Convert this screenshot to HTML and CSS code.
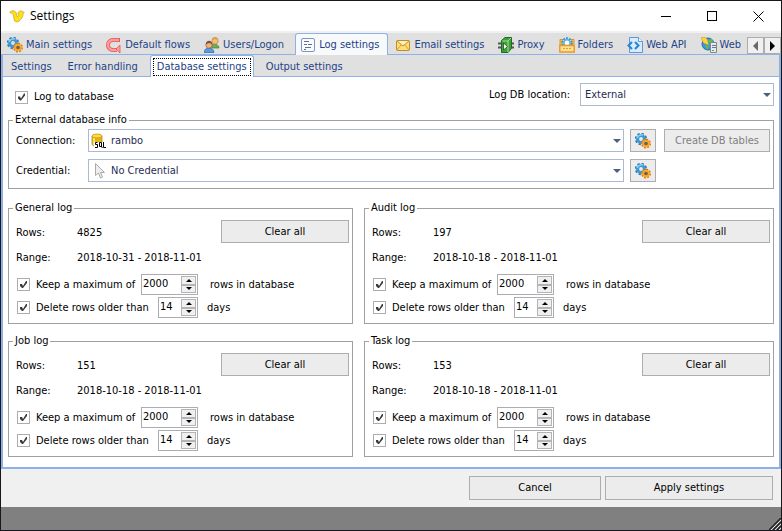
FILE: index.html
```html
<!DOCTYPE html>
<html lang="en">
<head>
    <meta charset="UTF-8">
    <meta name="viewport" content="width=device-width, initial-scale=1.0">
    <title>Settings</title>
    <link rel="stylesheet" href="styles.css">
</head>
<body>

    <!-- shared icons -->
    <svg class="defs" width="0" height="0">
        <symbol id="gears" viewBox="0 0 16 16">
            <circle cx="6" cy="6" r="5" fill="none" stroke="#2b7bb5" stroke-width="2.4" stroke-dasharray="2.2 1.7"/>
            <circle cx="6" cy="6" r="3.4" fill="none" stroke="#3f97d4" stroke-width="3"/>
            <path d="M2 5a5 5 0 0 1 6-3" fill="none" stroke="#8cd0f5" stroke-width="1.5"/>
            <circle cx="11" cy="10.5" r="4" fill="none" stroke="#d9780c" stroke-width="2" stroke-dasharray="1.8 1.3"/>
            <circle cx="11" cy="10.5" r="2.8" fill="#b85a08" stroke="#ffa621" stroke-width="2"/>
            <circle cx="11" cy="10.5" r="1.5" fill="#4b6a82"/>
        </symbol>
    </svg>

    <div class="window">
        <header class="titlebar">
            <svg class="logo" width="16" height="14" viewBox="0 0 16 14">
                <path d="M.7 3.5C2 1.5 5.500 1 7 3.500L8 7.500C10 7.500 10 6.500 9 5 8.500 3 10.500 1.500 12.500 2L15.300 3.500 14 4.500C14.500 8 12 9.500 10.500 12L8 13 5.500 12 4.500 7C4.500 5 3 4 .7 3.500z" fill="#fbe116" stroke="#cda92c" stroke-width=".8" stroke-linejoin="round"/>
            </svg>
            <h1>Settings</h1>
            <div class="window-buttons">
                <button aria-label="Minimize"><svg width="11" height="11"><path d="M0 5.5h10" stroke="#000"/></svg></button>
                <button aria-label="Maximize"><svg width="11" height="11"><rect x=".5" y=".5" width="9" height="9" fill="none" stroke="#000"/></svg></button>
                <button aria-label="Close"><svg width="11" height="11"><path d="M.5.5l10 10M10.500.5l-10 10" stroke="#000"/></svg></button>
            </div>
        </header>

        <div class="tabbar">
            <nav class="tabs">
                <button class="tab"><svg width="16" height="16"><use href="#gears"/></svg>Main settings</button>
                <button class="tab">
                    <svg width="16" height="16" viewBox="0 0 16 16">
                        <path d="M14 3H7a5 5 0 0 0 0 10h4" fill="none" stroke="#e05858" stroke-width="4"/>
                        <path d="M13 3H7a5 5 0 0 0 0 10h4" fill="none" stroke="#ff9c9c" stroke-width="2.4"/>
                        <path d="M14 8l-4 4 4 4z" fill="#ff9c9c" stroke="#e05858" stroke-width=".8"/>
                    </svg>Default flows</button>
                <button class="tab">
                    <svg width="16" height="16" viewBox="0 0 16 16">
                        <path d="M6 11c0-5 9-5 9 0z" fill="#6cae4c" stroke="#438234" stroke-width=".7"/>
                        <circle cx="11" cy="4" r="3.2" fill="#f3bd84" stroke="#b07434" stroke-width=".6"/>
                        <path d="M8 3c0-4 6-4 6 0-2-1-4-1-6 0" fill="#dba23f"/>
                        <path d="M0 15.5c0-6 10-6 10 0z" fill="#5b9be0" stroke="#2b68ad" stroke-width=".7"/>
                        <circle cx="5" cy="8" r="3.2" fill="#edb183" stroke="#8a5430" stroke-width=".6"/>
                        <path d="M1.8 7.5c0-5 6.5-5 6.5 0-2-2-4-2-6.5 0" fill="#805034"/>
                    </svg>Users/Logon</button>
                <button class="tab active">
                    <svg width="16" height="16" viewBox="0 0 16 16">
                        <rect x="1.5" y="1.5" width="13" height="13" rx="1.5" fill="#f9fbff" stroke="#7c95cb"/>
                        <path d="M4 4.5h5M4 7.5h3M8 7.5h4M5 10.5h6M4 12.5h2" stroke="#62708c"/>
                    </svg>Log settings</button>
                <button class="tab">
                    <svg width="16" height="16" viewBox="0 0 16 16">
                        <rect x="1.5" y="3.5" width="13" height="10" rx="1" fill="#ffdf72" stroke="#bc8b32"/>
                        <path d="M2 13l4-5M14 13l-4-5" stroke="#d09b38"/>
                        <path d="M2 4l6 5 6-5" fill="#fff0b4" stroke="#bc8b32"/>
                    </svg>Email settings</button>
                <button class="tab">
                    <svg width="16" height="16" viewBox="0 0 16 16">
                        <path d="M0 6.5h4M0 10.5h4M13 6.5h3M13 10.5h3" stroke="#555" stroke-width="2"/>
                        <path d="M3.500 3.500L7 .5h6.500v11L10 15.500H3.500z" fill="#3fa03a" stroke="#1f6a24"/>
                        <path d="M4.500 4h5.500l3-3M10 4v11" fill="none" stroke="#a6e291"/>
                        <path d="M5.500 6l4 3.500-4 3.500z" fill="#fff" stroke="#1b4f20" stroke-width=".8"/>
                    </svg>Proxy</button>
                <button class="tab">
                    <svg width="16" height="16" viewBox="0 0 16 16">
                        <path d="M1 2.500h14v7H1z" fill="#ffc04a" stroke="#e1941e"/>
                        <circle cx="8" cy="6" r="4.8" fill="#e9f7ff" stroke="#3994cc" stroke-width="2" stroke-dasharray="2 1"/>
                        <circle cx="8" cy="6" r="3.2" fill="#fff" stroke="#58afe0" stroke-width="1.600"/>
                        <path d="M.8 8.500h14.400v6.500H.8z" fill="#ffe18b" stroke="#ef9625" stroke-width="1.400"/>
                        <path d="M4 11.5h8" stroke="#cfa24b" stroke-dasharray="2 1"/>
                    </svg>Folders</button>
                <button class="tab">
                    <svg width="16" height="16" viewBox="0 0 16 16">
                        <path d="M2.500.5h9l4 4v11h-13z" fill="#d9ebff" stroke="#6095da"/>
                        <path d="M11.500.5v4h4" fill="#fff" stroke="#6095da"/>
                        <path d="M5 5L1.500 8.500 5 12M8 5l3.500 3.500L8 12" fill="none" stroke="#2586d2" stroke-width="2"/>
                    </svg>Web API</button>
                <button class="tab">
                    <svg width="16" height="16" viewBox="0 0 16 16">
                        <circle cx="7" cy="7" r="6" fill="#3a96dc" stroke="#2669a8"/>
                        <path d="M7 3l4-1 1 3-3 2zM4 8l4 1-2 4z" fill="#63bc43"/>
                        <path d="M0 .5l4.500 0 2 2.500 1 5-5-2z" fill="#ffd43a" stroke="#d99d1c" stroke-width=".6"/>
                        <path d="M9.500 5.500h6v10h-6z" fill="#e6eaee" stroke="#7d8a96"/>
                        <path d="M11 8.500h4M11 10.500h4" stroke="#6d7984"/>
                        <path d="M11 13.500h2" stroke="#4cbc2e"/>
                    </svg>Web</button>
            </nav>
            <div class="scroll-buttons">
                <button aria-label="Scroll left"><svg width="5" height="10"><path d="M5 0v10L0 5z" fill="#696969"/></svg></button>
                <button aria-label="Scroll right"><svg width="5" height="10"><path d="M0 0v10l5-5z" fill="#000"/></svg></button>
            </div>
        </div>

        <main class="page">
            <nav class="subtabs">
                <button class="subtab">Settings</button>
                <button class="subtab">Error handling</button>
                <button class="subtab active"><span>Database settings</span></button>
                <button class="subtab">Output settings</button>
            </nav>

            <div class="content">
                <div class="top-row">
                    <label class="check"><input type="checkbox" checked>Log to database</label>
                    <div class="location">
                        <label for="location">Log DB location:</label>
                        <div class="select">
                            <select id="location"><option>External</option></select>
                        </div>
                    </div>
                </div>

                <fieldset class="database">
                    <legend>External database info</legend>
                    <div class="db-row">
                        <label for="connection">Connection:</label>
                        <div class="select with-icon">
                            <svg width="16" height="16" viewBox="0 0 16 16">
                                <path d="M1 3v8c0 3 10 3 10 0V3z" fill="#e7b416" stroke="#a98018" stroke-width=".7"/>
                                <path d="M3 4v8" stroke="#fbe16c" stroke-width="2"/>
                                <ellipse cx="6" cy="3" rx="5" ry="2" fill="#ffdb3d" stroke="#b58a1d" stroke-width=".7"/>
                                <path d="M3 9h13v6H3z" fill="#fff"/>
                                <path d="M6.500 9.500h-2v2h2v3H4M8.500 9.500h2v4h-2zM10 13l1.500 2M12.500 9v5.500H15" fill="none" stroke="#000"/>
                            </svg>
                            <select id="connection"><option>rambo</option></select>
                        </div>
                        <button class="btn gear" aria-label="Manage connections"><svg width="16" height="16"><use href="#gears"/></svg></button>
                        <button class="btn create" disabled>Create DB tables</button>
                    </div>
                    <div class="db-row">
                        <label for="credential">Credential:</label>
                        <div class="select with-icon">
                            <svg width="16" height="16" viewBox="0 0 16 16">
                                <path d="M4.500.5v12l3-2.500 2 5 2-1-2-4.500h4z" fill="#eee" stroke="#aaa"/>
                            </svg>
                            <select id="credential"><option>No Credential</option></select>
                        </div>
                        <button class="btn gear" aria-label="Manage credentials"><svg width="16" height="16"><use href="#gears"/></svg></button>
                    </div>
                </fieldset>

                <div class="logs">
                    <fieldset class="log">
                        <legend>General log</legend>
                        <div class="log-info">
                            <dl>
                                <dt>Rows:</dt><dd>4825</dd>
                                <dt>Range:</dt><dd>2018-10-31 - 2018-11-01</dd>
                            </dl>
                            <button class="btn clear">Clear all</button>
                        </div>
                        <div class="limit">
                            <label class="check"><input type="checkbox" checked>Keep a maximum of</label>
                            <div class="spin wide">
                                <input type="number" value="2000" aria-label="Maximum rows">
                                <div class="arrows"><button aria-label="Up"></button><button aria-label="Down"></button></div>
                            </div>
                            <span>rows in database</span>
                        </div>
                        <div class="limit days">
                            <label class="check"><input type="checkbox" checked>Delete rows older than</label>
                            <div class="spin">
                                <input type="number" value="14" aria-label="Days">
                                <div class="arrows"><button aria-label="Up"></button><button aria-label="Down"></button></div>
                            </div>
                            <span>days</span>
                        </div>
                    </fieldset>

                    <fieldset class="log">
                        <legend>Audit log</legend>
                        <div class="log-info">
                            <dl>
                                <dt>Rows:</dt><dd>197</dd>
                                <dt>Range:</dt><dd>2018-10-18 - 2018-11-01</dd>
                            </dl>
                            <button class="btn clear">Clear all</button>
                        </div>
                        <div class="limit">
                            <label class="check"><input type="checkbox" checked>Keep a maximum of</label>
                            <div class="spin wide">
                                <input type="number" value="2000" aria-label="Maximum rows">
                                <div class="arrows"><button aria-label="Up"></button><button aria-label="Down"></button></div>
                            </div>
                            <span>rows in database</span>
                        </div>
                        <div class="limit days">
                            <label class="check"><input type="checkbox" checked>Delete rows older than</label>
                            <div class="spin">
                                <input type="number" value="14" aria-label="Days">
                                <div class="arrows"><button aria-label="Up"></button><button aria-label="Down"></button></div>
                            </div>
                            <span>days</span>
                        </div>
                    </fieldset>

                    <fieldset class="log">
                        <legend>Job log</legend>
                        <div class="log-info">
                            <dl>
                                <dt>Rows:</dt><dd>151</dd>
                                <dt>Range:</dt><dd>2018-10-18 - 2018-11-01</dd>
                            </dl>
                            <button class="btn clear">Clear all</button>
                        </div>
                        <div class="limit">
                            <label class="check"><input type="checkbox" checked>Keep a maximum of</label>
                            <div class="spin wide">
                                <input type="number" value="2000" aria-label="Maximum rows">
                                <div class="arrows"><button aria-label="Up"></button><button aria-label="Down"></button></div>
                            </div>
                            <span>rows in database</span>
                        </div>
                        <div class="limit days">
                            <label class="check"><input type="checkbox" checked>Delete rows older than</label>
                            <div class="spin">
                                <input type="number" value="14" aria-label="Days">
                                <div class="arrows"><button aria-label="Up"></button><button aria-label="Down"></button></div>
                            </div>
                            <span>days</span>
                        </div>
                    </fieldset>

                    <fieldset class="log">
                        <legend>Task log</legend>
                        <div class="log-info">
                            <dl>
                                <dt>Rows:</dt><dd>153</dd>
                                <dt>Range:</dt><dd>2018-10-18 - 2018-11-01</dd>
                            </dl>
                            <button class="btn clear">Clear all</button>
                        </div>
                        <div class="limit">
                            <label class="check"><input type="checkbox" checked>Keep a maximum of</label>
                            <div class="spin wide">
                                <input type="number" value="2000" aria-label="Maximum rows">
                                <div class="arrows"><button aria-label="Up"></button><button aria-label="Down"></button></div>
                            </div>
                            <span>rows in database</span>
                        </div>
                        <div class="limit days">
                            <label class="check"><input type="checkbox" checked>Delete rows older than</label>
                            <div class="spin">
                                <input type="number" value="14" aria-label="Days">
                                <div class="arrows"><button aria-label="Up"></button><button aria-label="Down"></button></div>
                            </div>
                            <span>days</span>
                        </div>
                    </fieldset>
                </div>
            </div>
        </main>

        <footer class="actions">
            <button class="btn cancel">Cancel</button>
            <button class="btn apply">Apply settings</button>
        </footer>
        <div class="statusbar">
            <svg width="12" height="12" viewBox="0 0 12 12">
                <path d="M0 12L12 0M4 12l8-8M8 12l4-4" stroke="#222" stroke-width="1.5"/>
                <path d="M2 12L12 2M6 12l6-6M10 12l2-2" stroke="#ddd"/>
            </svg>
        </div>
    </div>

</body>
</html>
```
FILE: styles.css
```css
* {
    box-sizing: border-box;
}

body {
    margin: 0;
    font-family: 'DejaVu Sans Condensed', 'DejaVu Sans', sans-serif;
    font-size: 11px;
    line-height: 14px;
    color: #000;
}

button, input, select {
    font: inherit;
    color: inherit;
    margin: 0;
    padding: 0;
    border: none;
    border-radius: 0;
    background: none;
}

svg {
    display: block;
    flex: none;
}

.defs {
    position: absolute;
}

.window {
    display: flex;
    flex-direction: column;
    min-height: 100vh;
    border: 1px solid #18181c;
    background-color: #f0f0f0;
}

/* title bar */
.titlebar {
    display: flex;
    align-items: center;
    height: 30px;
    padding-left: 8px;
    background-color: #fff;
}

.titlebar h1 {
    flex: 1;
    margin: 0 0 0 5px;
    font-family: 'Open Sans', sans-serif;
    font-size: 12px;
    font-weight: normal;
}

.window-buttons {
    display: flex;
}

.window-buttons button {
    display: flex;
    align-items: center;
    justify-content: center;
    width: 46px;
    height: 28px;
}

/* main tabs */
.tabbar {
    display: flex;
    margin-top: 2px;
    height: 22px;
    background-color: #e0e0e0;
    border-bottom: 1px solid #8db2e3;
}

.tabs {
    display: flex;
    flex: 1;
    height: 22px;
    min-width: 0;
    overflow: hidden;
    padding-left: 1px;
    color: #1e4287;
}

.tab {
    display: flex;
    flex: none;
    align-items: center;
    gap: 3px;
    height: 22px;
    padding: 1px 8px 0 4px;
    border: 1px solid transparent;
    border-bottom: none;
    white-space: nowrap;
}

.tab.active {
    margin: 0 2px;
    border-color: #8db2e3;
    border-radius: 3px 3px 0 0;
    background-color: #f8f9fb;
}

.scroll-buttons {
    display: flex;
    align-items: flex-end;
}

.scroll-buttons button {
    display: flex;
    align-items: center;
    justify-content: center;
    width: 17px;
    height: 17px;
    border: 1px solid #adadad;
    background-color: #f0f0f0;
}

/* page below the tabs */
.page {
    flex: 1;
    display: flex;
    flex-direction: column;
    border: 2px solid #8fb0e6;
    border-top: none;
    background-color: #fff;
}

.subtabs {
    display: flex;
    height: 22px;
    background-color: #e0e0e0;
    border-bottom: 1px solid #8db2e3;
    color: #1e4287;
}

.subtab {
    height: 22px;
    padding: 2px 8px 0;
    white-space: nowrap;
}

.subtab.active {
    margin: 0 4px;
    padding: 1px 2px 0;
    border: 1px solid #8db2e3;
    border-bottom: none;
    border-radius: 3px 3px 0 0;
    background-color: #fff;
}

.subtab.active span {
    display: block;
    padding: 1px 3px;
    border: 1px dotted #000;
}

.content {
    padding: 6px 5px 10px;
}

.top-row {
    display: flex;
    align-items: flex-end;
    justify-content: space-between;
    margin-bottom: 7px;
    padding-left: 7px;
}

.top-row .check {
    padding-bottom: 2px;
}

.location {
    display: flex;
    align-items: center;
    gap: 10px;
}

.location .select {
    width: 194px;
}

/* controls */
.check {
    display: flex;
    align-items: center;
    gap: 6px;
    white-space: nowrap;
}

.check input {
    appearance: none;
    flex: none;
    width: 13px;
    height: 13px;
    border: 1px solid #adadad;
    background-color: #fff;
}

.check input:checked::before {
    content: '';
    display: block;
    width: 11px;
    height: 11px;
    background-color: #3c3c3c;
    clip-path: polygon(2px 5px, 4px 5px, 5px 7px, 8px 2px, 9px 2px, 9px 4px, 5px 9px, 4px 9px, 2px 7px);
}

.select {
    position: relative;
    height: 23px;
}

.select select {
    appearance: none;
    width: 100%;
    height: 23px;
    padding-left: 4px;
    border: 1px solid #abbad0;
    background-color: #fff;
    color: #1f2c55;
}

.select::after {
    content: '';
    position: absolute;
    right: 3px;
    top: 10px;
    border: 4px solid transparent;
    border-top-color: #4d6185;
    border-bottom: none;
    pointer-events: none;
}

.select.with-icon {
    flex: 1;
}

.select.with-icon select {
    padding-left: 22px;
}

.select.with-icon svg {
    position: absolute;
    left: 3px;
    top: 4px;
    pointer-events: none;
}

.btn {
    height: 23px;
    border: 1px solid #adadad;
    background-color: #ececec;
    white-space: nowrap;
}

.btn:hover {
    background-color: #e4eef8;
}

.btn:disabled {
    color: #808080;
    background-color: #ececec;
}

/* groups */
fieldset {
    min-width: 0;
    margin: 0;
    border: 1px solid #a0a0a0;
}

legend {
    margin-left: 4px;
    padding: 0 2px;
}

.database {
    display: grid;
    gap: 7px;
    padding: 2px 3px 6px 0;
}

.db-row {
    display: flex;
    align-items: center;
}

.db-row label {
    width: 79px;
    padding-left: 7px;
}

.gear {
    display: flex;
    align-items: center;
    justify-content: center;
    width: 26px;
    margin: 0 114px 0 6px;
}

.db-row .gear:not(:last-child) {
    margin-right: 8px;
}

.create {
    width: 106px;
}

.logs {
    display: grid;
    grid-template-columns: 345fr 410fr;
    gap: 10px 11px;
    margin-top: 12px;
}

.log {
    padding: 5px 3px 5px 7px;
}

.log legend {
    margin-left: -3px;
}

.log-info {
    display: flex;
    align-items: flex-start;
    justify-content: space-between;
    margin-bottom: 4px;
}

dl {
    display: grid;
    grid-template-columns: 61px auto;
    margin: 0;
    line-height: 25px;
}

dd {
    margin: 0;
}

.clear {
    width: 128px;
}

.limit {
    display: flex;
    align-items: center;
    padding-left: 1px;
}

.limit .check {
    width: 124px;
}

.limit.days {
    margin-top: 2px;
}

.limit.days .check {
    width: 141px;
}

.limit > span {
    margin-left: 12px;
}

.limit.days > span {
    margin-left: 9px;
}

.spin {
    display: flex;
    width: 40px;
    height: 21px;
    padding: 1px;
    border: 1px solid #abadb3;
    background-color: #fff;
}

.spin.wide {
    width: 57px;
}

.spin input {
    appearance: textfield;
    flex: 1;
    width: 0;
    min-width: 0;
    height: 15px;
}

.spin input::-webkit-inner-spin-button {
    display: none;
}

.arrows {
    display: flex;
    flex-direction: column;
    width: 15px;
}

.arrows button {
    display: flex;
    flex: 1;
    align-items: center;
    justify-content: center;
    border: 1px solid #b4b4b4;
    background-color: #f0f0f0;
}

.arrows button::before {
    content: '';
    border: 3px solid transparent;
    border-top: none;
    border-bottom-color: #000;
}

.arrows button:last-child::before {
    border-top: 3px solid #000;
    border-bottom: none;
}

/* bottom */
.actions {
    display: flex;
    justify-content: flex-end;
    gap: 4px;
    padding: 7px 8px;
}

.actions .btn {
    height: 24px;
}

.cancel {
    width: 132px;
}

.apply {
    width: 168px;
}

.statusbar {
    display: flex;
    align-items: flex-end;
    justify-content: flex-end;
    height: 23px;
    background-color: #808080;
}
```
